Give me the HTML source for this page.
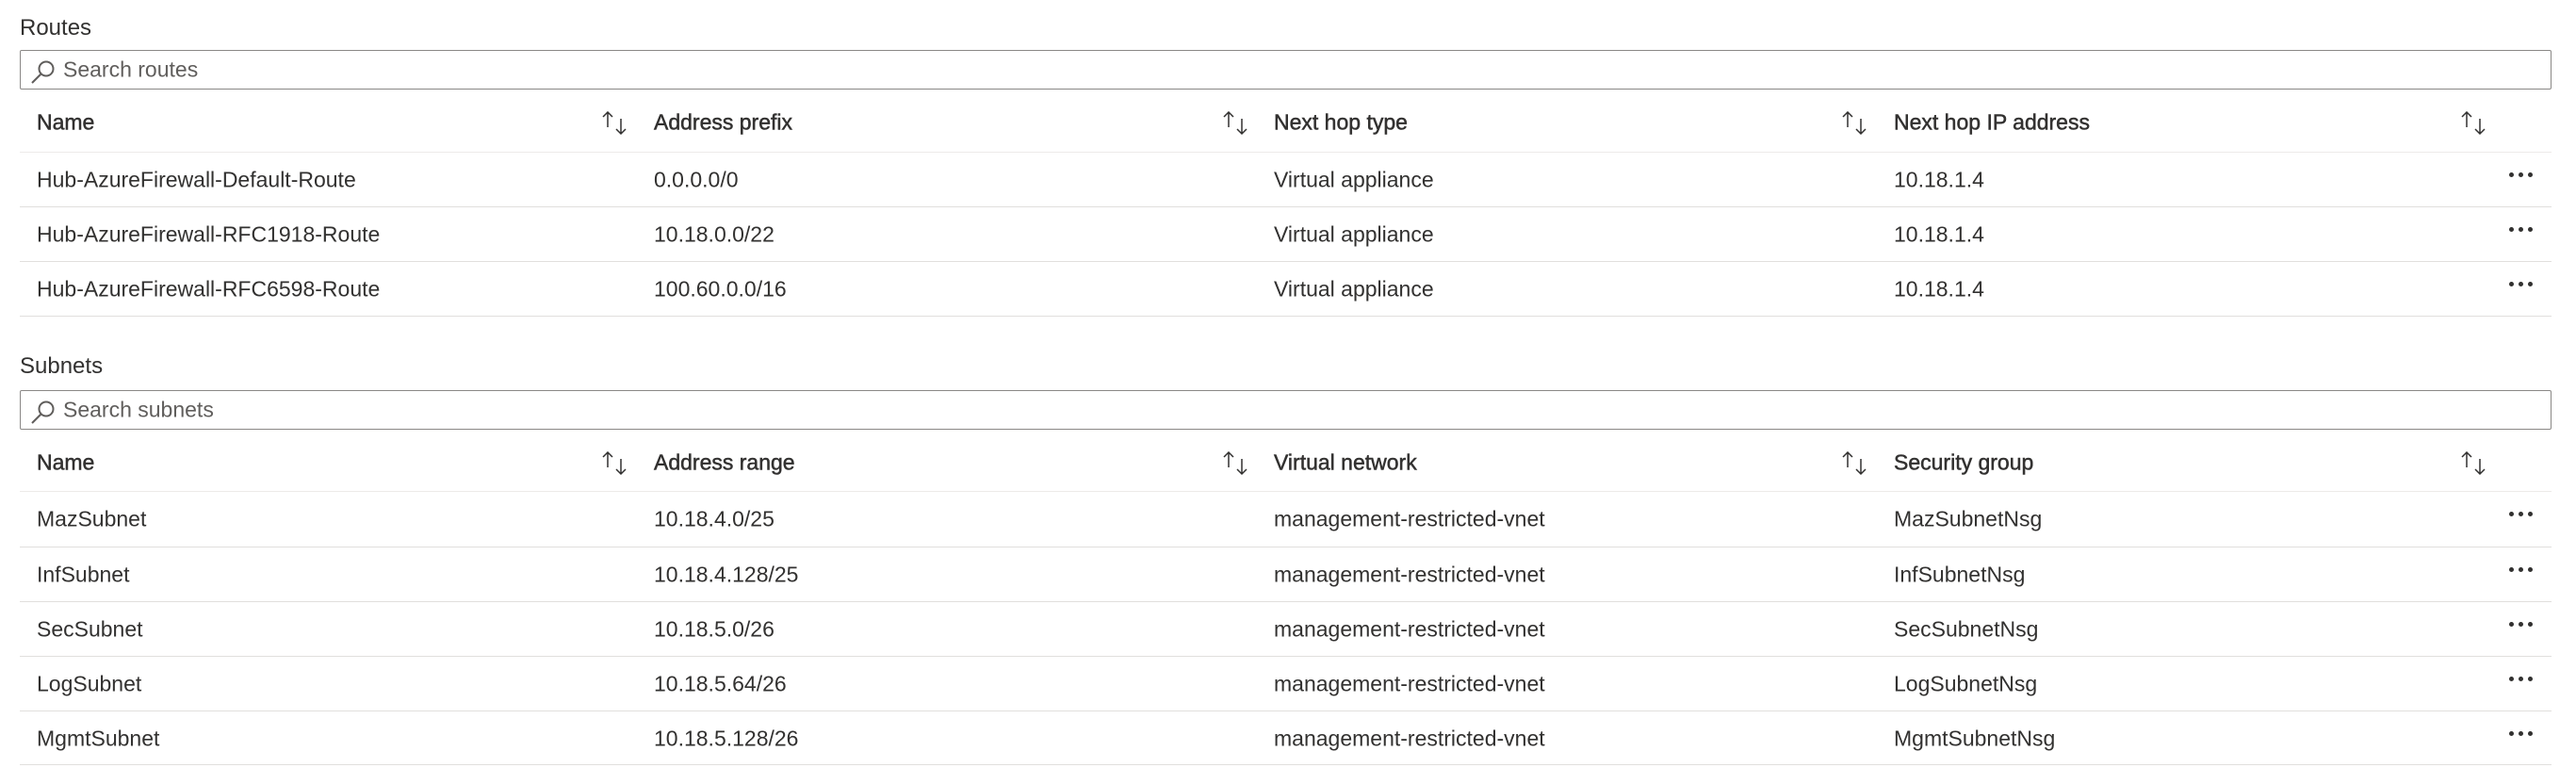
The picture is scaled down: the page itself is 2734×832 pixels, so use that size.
<!DOCTYPE html>
<html><head><meta charset="utf-8"><style>
body{margin:0;width:2734px;height:832px;background:#fff;position:relative;overflow:hidden;font-family:"Liberation Sans",sans-serif;color:#323130}
.a{position:absolute;white-space:nowrap;line-height:1}
.t{font-size:24px}
.h{font-size:23px;-webkit-text-stroke:0.5px #323130;transform:translateY(-50%)}
.c{font-size:23px;transform:translateY(-50%)}
.box{position:absolute;left:21px;width:2687px;height:42px;border:1px solid #8a8886;border-radius:2px;box-sizing:border-box}
.box span{position:absolute;left:45px;top:50%;transform:translateY(-50%);font-size:23px;color:#605e5c}
.box svg{position:absolute;left:10px;top:8px}
.ln{position:absolute;left:21px;width:2687px;height:1px;background:#e1dfdd}
.lh{background:#edebe9}
.s{position:absolute}
.d{position:absolute;width:28px;height:6px}
.d i{position:absolute;top:0;width:5px;height:5px;border-radius:50%;background:#323130}
</style></head><body>
<div class="a t" style="left:21px;top:18px">Routes</div>
<div class="box" style="top:53px"><svg width="28" height="28" viewBox="0 0 28 28"><circle cx="17" cy="11" r="7.5" fill="none" stroke="#605e5c" stroke-width="2"/><line x1="11.5" y1="16.5" x2="2" y2="26" stroke="#605e5c" stroke-width="2"/></svg><span>Search routes</span></div>

<div class="a t" style="left:21px;top:377px">Subnets</div>
<div class="box" style="top:414px"><svg width="28" height="28" viewBox="0 0 28 28"><circle cx="17" cy="11" r="7.5" fill="none" stroke="#605e5c" stroke-width="2"/><line x1="11.5" y1="16.5" x2="2" y2="26" stroke="#605e5c" stroke-width="2"/></svg><span>Search subnets</span></div>

<div id="g"></div>
<script>
function sort(x,y){return '<svg class="s" style="left:'+(x-10)+'px;top:'+(y-12)+'px" width="30" height="26" viewBox="0 0 30 26"><path d="M8 1V17M3 6L8 1L13 6" fill="none" stroke="#323130" stroke-width="1.5"/><path d="M22 8V24M17 19L22 24L27 19" fill="none" stroke="#323130" stroke-width="1.5"/></svg>'}
function dots(y){return '<div class="d" style="left:2663px;top:'+(y-6)+'px"><i style="left:0"></i><i style="left:10px"></i><i style="left:20px"></i></div>'}
var cols=[39,694,1352,2010],sx=[647,1306,1963,2620];
var h='';
function table(hy,hl,heads,rows,ry,lines){
 heads.forEach(function(t,i){h+='<div class="a h" style="left:'+cols[i]+'px;top:'+hy+'px">'+t+'</div>'+sort(sx[i],hy)});
 h+='<div class="ln lh" style="top:'+hl+'px"></div>';
 rows.forEach(function(r,j){r.forEach(function(t,i){h+='<div class="a c" style="left:'+cols[i]+'px;top:'+ry[j]+'px">'+t+'</div>'});h+=dots(ry[j]-2);h+='<div class="ln" style="top:'+lines[j]+'px"></div>'});
}
table(130,161,['Name','Address prefix','Next hop type','Next hop IP address'],[
['Hub-AzureFirewall-Default-Route','0.0.0.0/0','Virtual appliance','10.18.1.4'],
['Hub-AzureFirewall-RFC1918-Route','10.18.0.0/22','Virtual appliance','10.18.1.4'],
['Hub-AzureFirewall-RFC6598-Route','100.60.0.0/16','Virtual appliance','10.18.1.4']],[191,249,307],[219,277,335]);
table(491,521,['Name','Address range','Virtual network','Security group'],[
['MazSubnet','10.18.4.0/25','management-restricted-vnet','MazSubnetNsg'],
['InfSubnet','10.18.4.128/25','management-restricted-vnet','InfSubnetNsg'],
['SecSubnet','10.18.5.0/26','management-restricted-vnet','SecSubnetNsg'],
['LogSubnet','10.18.5.64/26','management-restricted-vnet','LogSubnetNsg'],
['MgmtSubnet','10.18.5.128/26','management-restricted-vnet','MgmtSubnetNsg']],[551,610,668,726,784],[580,638,696,754,811]);
document.getElementById('g').innerHTML=h;
</script>
</body></html>
